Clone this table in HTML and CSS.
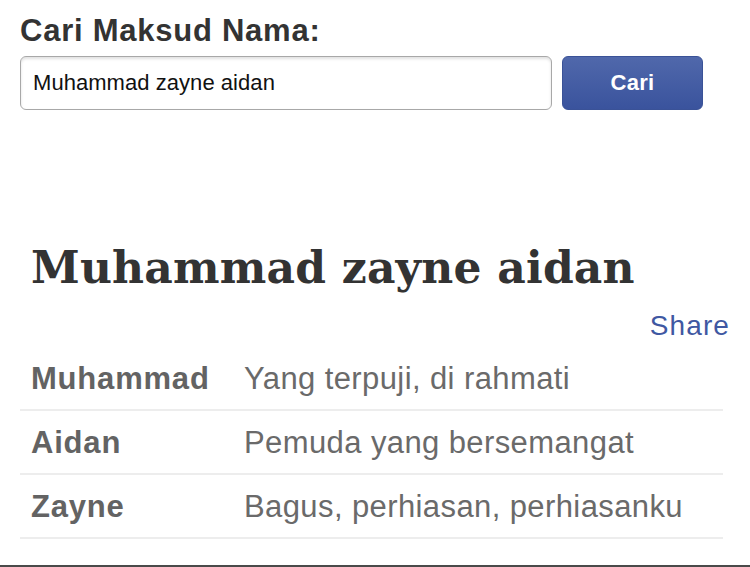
FILE: index.html
```html
<!DOCTYPE html>
<html lang="id">
<head>
<meta charset="utf-8">
<title>Cari Maksud Nama</title>
<link rel="stylesheet" href="styles.css">
</head>
<body>
<div class="page">
  <form class="search">
    <label class="search-label" for="q">Cari Maksud Nama:</label>
    <div class="search-row">
      <input class="search-input" id="q" type="text" value="Muhammad zayne aidan">
      <button class="search-btn" type="button">Cari</button>
    </div>
  </form>
  <section class="result">
    <h1 class="result-title">Muhammad zayne aidan</h1>
    <div class="share-row"><a class="share" href="#">Share</a></div>
    <div class="meanings">
      <div class="meaning-row"><span class="name">Muhammad</span><span class="value">Yang terpuji, di rahmati</span></div>
      <div class="meaning-row"><span class="name">Aidan</span><span class="value">Pemuda yang bersemangat</span></div>
      <div class="meaning-row"><span class="name">Zayne</span><span class="value">Bagus, perhiasan, perhiasanku</span></div>
    </div>
  </section>
</div>
<div class="bottom-bar"></div>
</body>
</html>
```
FILE: styles.css
```css
html, body {
  margin: 0;
  padding: 0;
  height: 100%;
  background: #fff;
}
body {
  display: flex;
  flex-direction: column;
  font-family: "Liberation Sans", Arial, sans-serif;
  overflow: hidden;
}
.page {
  padding: 13px 20px 0 20px;
  flex: 1;
}
.search {
  margin: 0;
}
.search-label {
  display: block;
  font-size: 31px;
  line-height: 36px;
  font-weight: bold;
  letter-spacing: 0.75px;
  color: #333;
}
.search-row {
  display: flex;
  gap: 10px;
  margin-top: 7px;
}
.search-input {
  box-sizing: border-box;
  width: 532px;
  height: 54px;
  margin: 0;
  padding: 0 12px;
  border: 1.5px solid #a8a8a8;
  border-radius: 6px;
  box-shadow: inset 0 2px 3px rgba(0,0,0,0.12);
  font-family: "Liberation Sans", Arial, sans-serif;
  font-size: 22px;
  letter-spacing: 0.05px;
  color: #111;
  background: #fff;
  outline: none;
}
.search-btn {
  box-sizing: border-box;
  width: 141px;
  height: 54px;
  margin: 0;
  border: 1px solid #3a5297;
  border-radius: 6px;
  background: linear-gradient(#5068ab, #3a539d);
  color: #fff;
  font-family: "Liberation Sans", Arial, sans-serif;
  font-size: 22px;
  font-weight: bold;
  letter-spacing: 0.3px;
}
.result {
  margin-top: 133px;
}
.result-title {
  margin: 0;
  padding-left: 11px;
  font-family: "DejaVu Serif", "Liberation Serif", serif;
  font-weight: bold;
  font-size: 44px;
  line-height: 50px;
  letter-spacing: 0.2px;
  color: #333;
}
.share-row {
  margin-top: 16px;
  display: flex;
  justify-content: flex-end;
  height: 34px;
}
.share {
  margin-right: 0;
  font-size: 28px;
  line-height: 34px;
  letter-spacing: 1.1px;
  color: #3f58a2;
  text-decoration: none;
}
.meanings {
  margin-top: 4px;
  margin-right: 7px;
}
.meaning-row {
  display: grid;
  grid-template-columns: 224px 1fr;
  padding-top: 2px;
  line-height: 60px;
  border-bottom: 2px solid #ededed;
  font-size: 31px;
  color: #666;
}
.name {
  padding-left: 11px;
  font-weight: bold;
  letter-spacing: 0.8px;
  color: #636363;
}
.value {
  letter-spacing: 0.4px;
  color: #6a6a6a;
}
.bottom-bar {
  height: 2px;
  background: #4a4a4a;
  flex-shrink: 0;
}
```
